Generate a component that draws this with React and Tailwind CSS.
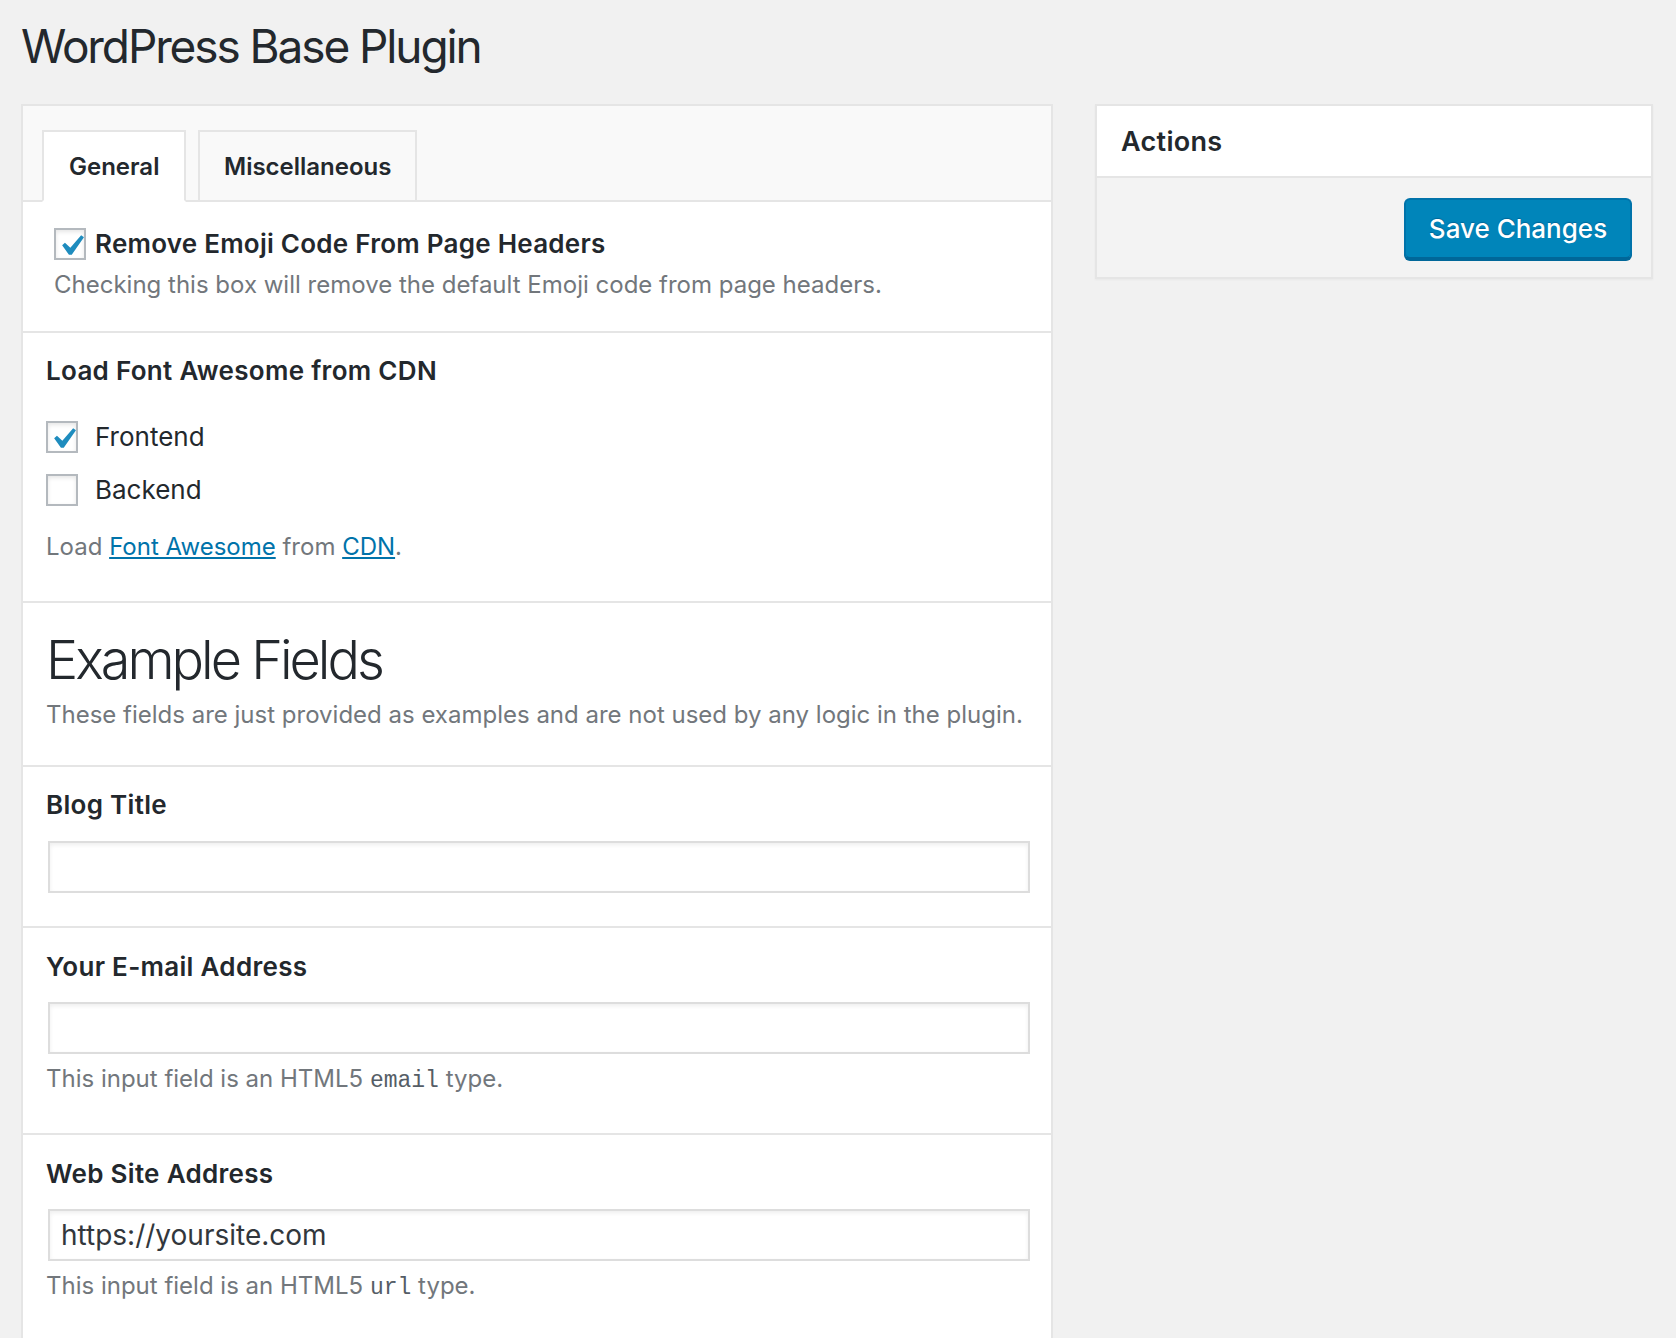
import { useState } from "react";

const Check = ({ checked, onChange }) => (
  <button
    type="button"
    onClick={onChange}
    className="relative w-[32px] h-[32px] shrink-0 bg-white border-2 border-[#b4b9be] shadow-[inset_0_2px_4px_rgba(0,0,0,0.1)]"
  >
    {checked && (
      <svg viewBox="0 0 20 20" className="absolute left-[-6px] top-[-5px] w-[42px] h-[42px]">
        <path fill="#1e8cbe" d="M14.83 4.89l1.34.94-5.81 8.38H9.02L5.78 9.67l1.34-1.25 2.57 2.4z" />
      </svg>
    )}
  </button>
);

const Field = ({ label, value, help }) => (
  <div className="border-t-2 border-[#e5e5e5] px-[23px] pt-[23px] pb-[36px]">
    <div className="text-[26px] leading-[32px] font-semibold tracking-[0.3px] text-[#23282d]">{label}</div>
    <input
      defaultValue={value}
      className="mt-[19px] ml-[2px] block w-[982px] h-[52px] border-2 border-[#dddddd] bg-white pl-[11px] text-[28px] text-[#32373c] outline-none shadow-[inset_0_2px_4px_rgba(0,0,0,0.07)]"
    />
    {help && <p className="mt-[9px] text-[24px] leading-[32px] text-[#72777c]">{help}</p>}
  </div>
);

export default function App() {
  const [tab, setTab] = useState("general");
  const [emoji, setEmoji] = useState(true);
  const [front, setFront] = useState(true);
  const [back, setBack] = useState(false);

  return (
    <div className="min-h-screen bg-[#f1f1f1] pl-[21px] pr-[23px] pt-[23px] font-['Inter',sans-serif] text-[#23282d]">
      <h1 className="text-[46px] leading-[46px] font-normal tracking-[-2.1px]">WordPress Base Plugin</h1>

      <div className="mt-[35px] flex items-start gap-[42px]">
        {/* Main panel */}
        <div className="w-[1032px] bg-white border-2 border-b-0 border-[#e5e5e5]">
          <div className="flex items-end gap-[12px] bg-[#f9f9f9] pt-[24px] pl-[19px] border-b-2 border-[#e5e5e5] h-[96px]">
            <button
              onClick={() => setTab("general")}
              className={`-mb-[2px] flex items-start w-[144px] h-[72px] border-2 pt-[23px] pl-[25px] text-[24px] leading-[24px] font-semibold border-[#e5e5e5] ${
                tab === "general" ? "bg-white border-b-white" : "bg-[#f9f9f9]"
              }`}
            >
              General
            </button>
            <button
              onClick={() => setTab("misc")}
              className={`-mb-[2px] flex items-start w-[219px] h-[72px] border-2 pt-[23px] pl-[24px] text-[24px] leading-[24px] font-semibold border-[#e5e5e5] ${
                tab === "misc" ? "bg-white border-b-white" : "bg-[#f9f9f9]"
              }`}
            >
              Miscellaneous
            </button>
          </div>

          {/* Emoji */}
          <div className="pl-[31px] pt-[26px] pb-[30px]">
            <div className="flex items-center gap-[9px] h-[32px]">
              <Check checked={emoji} onChange={() => setEmoji(!emoji)} />
              <span className="text-[26px] leading-[32px] font-semibold tracking-[0.25px]">
                Remove Emoji Code From Page Headers
              </span>
            </div>
            <p className="mt-[9px] text-[24px] leading-[32px] text-[#72777c]">
              Checking this box will remove the default Emoji code from page headers.
            </p>
          </div>

          {/* Font Awesome */}
          <div className="border-t-2 border-[#e5e5e5] px-[23px] pt-[22px] pb-[38px]">
            <div className="text-[26px] leading-[32px] font-semibold tracking-[0.3px]">Load Font Awesome from CDN</div>
            <div className="mt-[34px] flex items-center gap-[17px] h-[32px]">
              <Check checked={front} onChange={() => setFront(!front)} />
              <span className="text-[26px] leading-[32px]">Frontend</span>
            </div>
            <div className="mt-[21px] flex items-center gap-[17px] h-[32px]">
              <Check checked={back} onChange={() => setBack(!back)} />
              <span className="text-[26px] leading-[32px]">Backend</span>
            </div>
            <p className="mt-[25px] text-[24px] leading-[32px] text-[#72777c]">
              Load <a href="#" className="text-[#0073aa] underline">Font Awesome</a> from{" "}
              <a href="#" className="text-[#0073aa] underline">CDN</a>.
            </p>
          </div>

          {/* Example fields */}
          <div className="border-t-2 border-[#e5e5e5] px-[23px] pt-[25px] pb-[34px]">
            <h2 className="text-[54px] leading-[64px] font-light tracking-[-3px]">Example Fields</h2>
            <p className="mt-[7px] text-[24px] leading-[32px] text-[#72777c]">
              These fields are just provided as examples and are not used by any logic in the plugin.
            </p>
          </div>

          <div className="border-t-2 border-[#e5e5e5] px-[23px] pt-[22px] pb-[33px]">
            <div className="text-[26px] leading-[32px] font-semibold tracking-[0.3px]">Blog Title</div>
            <input className="mt-[20px] ml-[2px] block w-[982px] h-[52px] border-2 border-[#dddddd] bg-white pl-[11px] text-[28px] text-[#32373c] outline-none shadow-[inset_0_2px_4px_rgba(0,0,0,0.07)]" />
          </div>

          <Field
            label="Your E-mail Address"
            help={
              <>
                This input field is an HTML5{" "}
                <code className="font-['Liberation_Mono',monospace] text-[23px] text-[#555d66]">email</code> type.
              </>
            }
          />
          <Field
            label="Web Site Address"
            value="https://yoursite.com"
            help={
              <>
                This input field is an HTML5{" "}
                <code className="font-['Liberation_Mono',monospace] text-[23px] text-[#555d66]">url</code> type.
              </>
            }
          />
        </div>

        {/* Sidebar */}
        <div className="w-[558px] border-2 border-[#e5e5e5] shadow-[0_1px_2px_rgba(0,0,0,0.04)]">
          <div className="bg-white h-[72px] pt-[20px] pl-[24px] border-b-2 border-[#e5e5e5]">
            <h2 className="text-[27px] leading-[32px] font-semibold tracking-[0.3px]">Actions</h2>
          </div>
          <div className="bg-[#f3f3f3] flex justify-end pt-[20px] pr-[19px] pb-[18px]">
            <button className="w-[228px] h-[61px] rounded-[6px] bg-[#0085ba] border-2 border-[#0073aa] border-b-[#006799] shadow-[0_2px_0_#006799] text-white text-[26px] font-medium [text-shadow:0_-1px_1px_#006799]">
              Save Changes
            </button>
          </div>
        </div>
      </div>
    </div>
  );
}
